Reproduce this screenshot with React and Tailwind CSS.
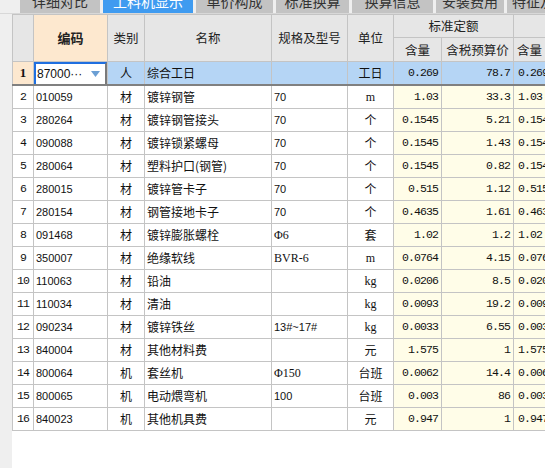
import React from 'react'

const rows = [
  ['1', '87000···', '人', '综合工日', '', '工日', '0.269', '78.7', '0.269'],
  ['2', '010059', '材', '镀锌钢管', '70', 'm', '1.03', '33.3', '1.03'],
  ['3', '280264', '材', '镀锌钢管接头', '70', '个', '0.1545', '5.21', '0.1545'],
  ['4', '090088', '材', '镀锌锁紧螺母', '70', '个', '0.1545', '1.43', '0.1545'],
  ['5', '280064', '材', '塑料护口(钢管)', '70', '个', '0.1545', '0.82', '0.1545'],
  ['6', '280015', '材', '镀锌管卡子', '70', '个', '0.515', '1.12', '0.515'],
  ['7', '280154', '材', '钢管接地卡子', '70', '个', '0.4635', '1.61', '0.4635'],
  ['8', '091468', '材', '镀锌膨胀螺栓', 'Φ6', '套', '1.02', '1.2', '1.02'],
  ['9', '350007', '材', '绝缘软线', 'BVR-6', 'm', '0.0764', '4.15', '0.0764'],
  ['10', '110063', '材', '铅油', '', 'kg', '0.0206', '8.5', '0.0206'],
  ['11', '110034', '材', '清油', '', 'kg', '0.0093', '19.2', '0.0093'],
  ['12', '090234', '材', '镀锌铁丝', '13#~17#', 'kg', '0.0033', '6.55', '0.0033'],
  ['13', '840004', '材', '其他材料费', '', '元', '1.575', '1', '1.575'],
  ['14', '800064', '机', '套丝机', 'Φ150', '台班', '0.0062', '14.4', '0.0062'],
  ['15', '800065', '机', '电动煨弯机', '100', '台班', '0.003', '86', '0.003'],
  ['16', '840023', '机', '其他机具费', '', '元', '0.947', '1', '0.947'],
]

const tabs = [
  { label: '详细对比', w: 'w-[80px]' },
  { label: '工料机显示', w: 'w-[90px]', active: true },
  { label: '单价构成', w: 'w-[77px]' },
  { label: '标准换算', w: 'w-[73px]' },
  { label: '换算信息', w: 'w-[81px]' },
  { label: '安装费用', w: 'w-[68px]' },
  { label: '特征及内容', w: 'w-[80px]' },
]

const cjk = "font-['Noto_Sans_CJK_SC',sans-serif]"
const mono = "font-['Liberation_Mono',monospace] text-[11.5px] tracking-[-0.9px]"
const sans = "font-['Liberation_Sans',sans-serif] text-[11px]"
const serif = "font-['Liberation_Serif',serif] text-[12px]"

function Tabs() {
  return (
    <div className="flex h-[14px] overflow-hidden bg-[#efefef] border-b border-[#d8d8d8]">
      <div className="w-[20px] shrink-0" />
      {tabs.map(t => (
        <div
          key={t.label}
          className={`${t.w} shrink-0 h-[13px] mr-[3px] overflow-hidden flex justify-center ${t.active ? 'bg-[#3f9bf0] text-white' : 'bg-[#c3c3c3] text-[#333]'}`}
        >
          <span className={`${cjk} text-[14px] leading-[14px] -mt-[6px] whitespace-nowrap`}>{t.label}</span>
        </div>
      ))}
    </div>
  )
}

function App() {
  const th = `border border-[#c4c4c4] bg-[#e6e6e6] text-[#222] font-normal text-[12.5px] ${cjk} p-0`
  return (
    <div className="w-[545px] h-[468px] overflow-hidden bg-white">
      <Tabs />
      <div className="flex h-[454px]">
        <div className="w-[12px] shrink-0 bg-[#efefef]" />
        <div className="flex-1 overflow-hidden">
          <table className="border-collapse table-fixed w-[570px] text-[12px] leading-[16px] text-[#111]">
            <colgroup>
              <col className="w-[21px]" />
              <col className="w-[74px]" />
              <col className="w-[37px]" />
              <col className="w-[127px]" />
              <col className="w-[76px]" />
              <col className="w-[46px]" />
              <col className="w-[48px]" />
              <col className="w-[72px]" />
              <col className="w-[69px]" />
            </colgroup>
            <thead>
              <tr className="h-[23px]">
                <th rowSpan={2} className={th} />
                <th rowSpan={2} className={`${th} !bg-[#fde8cf] !font-bold text-[13px]`}>编码</th>
                <th rowSpan={2} className={th}>类别</th>
                <th rowSpan={2} className={th}>名称</th>
                <th rowSpan={2} className={th}>规格及型号</th>
                <th rowSpan={2} className={th}>单位</th>
                <th colSpan={2} className={th}>标准定额</th>
                <th className={th} />
              </tr>
              <tr className="h-[24px]">
                <th className={th}>含量</th>
                <th className={th}>含税预算价</th>
                <th className={`${th} text-left pl-[3px]`}>含量</th>
              </tr>
            </thead>
            <tbody>
              {rows.map((r, i) => {
                const sel = i === 0
                const td = `border border-[#c4c4c4] p-0 h-[23px] ${sel ? 'border-b-2 border-b-[#808080]' : ''}`
                const base = sel ? 'bg-[#b5d5f5]' : 'bg-white'
                const qty = sel ? 'bg-[#b5d5f5]' : 'bg-[#fffde8]'
                return (
                  <tr key={r[0]}>
                    <td className={`${td} text-center ${sel ? "bg-[#fde8cf] font-bold font-['Liberation_Serif',serif] text-[13px]" : `bg-white ${mono}`}`}>{r[0]}</td>
                    <td className={`${td} bg-white`}>
                      {sel ? (
                        <div className="h-[22px] border-t-2 border-l-2 border-t-[#1f6fe0] border-l-[#1f6fe0] border-r-2 border-r-[#7a7a7a] flex items-center justify-between pl-[1px] pr-[5px]">
                          <span className={`${sans} text-[12px]`}>{r[1]}</span>
                          <svg width="9" height="6" viewBox="0 0 9 6"><path d="M0 0h9L4.5 6z" fill="#6b9fd4" /></svg>
                        </div>
                      ) : (
                        <span className={`${sans} pl-[2px]`}>{r[1]}</span>
                      )}
                    </td>
                    <td className={`${td} ${base} text-center ${cjk}`}>{r[2]}</td>
                    <td className={`${td} ${base} pl-[2px] ${cjk} whitespace-nowrap overflow-hidden`}>{r[3]}</td>
                    <td className={`${td} ${base} pl-[2px] whitespace-nowrap ${/^[0-9]/.test(r[4]) ? sans : serif}`}>{r[4]}</td>
                    <td className={`${td} ${base} text-center ${/^[a-z]/.test(r[5]) ? serif : cjk}`}>{r[5]}</td>
                    <td className={`${td} ${qty} text-right pr-[3px] ${mono}`}>{r[6]}</td>
                    <td className={`${td} ${qty} text-right pr-[3px] ${mono}`}>{r[7]}</td>
                    <td className={`${td} ${qty} text-left pl-[4px] ${mono}`}>{r[8]}</td>
                  </tr>
                )
              })}
            </tbody>
          </table>
        </div>
      </div>
    </div>
  )
}

export default App
